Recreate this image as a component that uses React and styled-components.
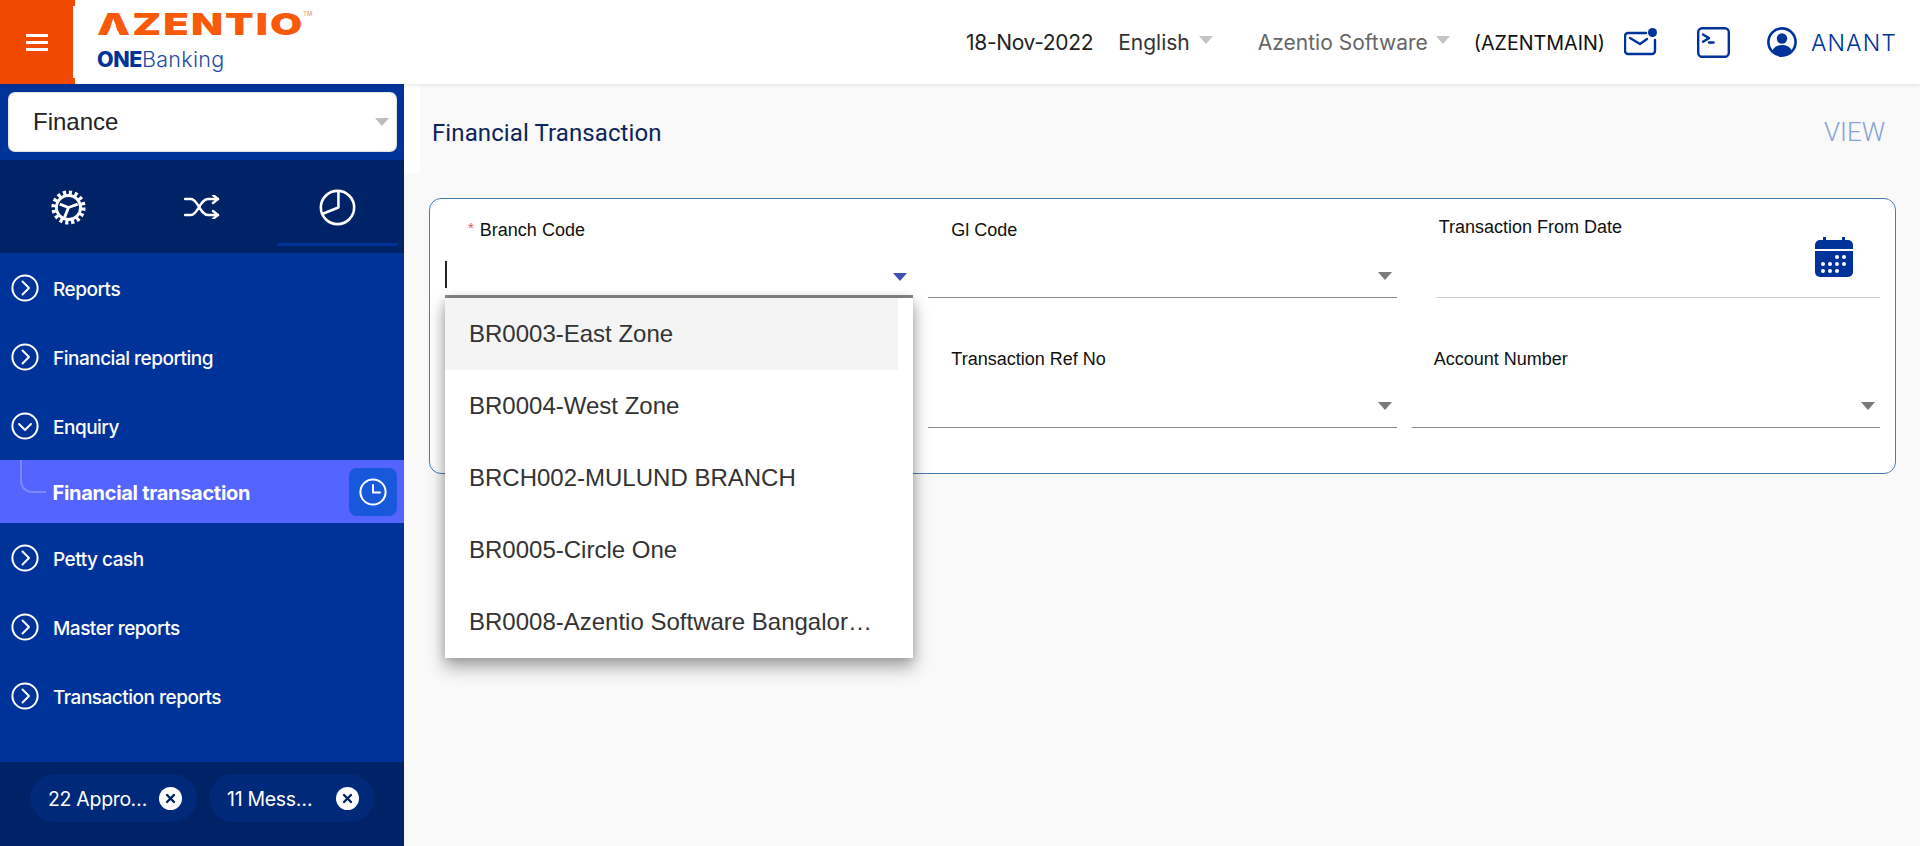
import React from 'react';
import styled, { createGlobalStyle } from 'styled-components';

const Global = createGlobalStyle`
  html, body { margin: 0; padding: 0; height: 100%; background: #f9f9f9; }
  * { box-sizing: border-box; }
  body { font-family: "Inter", "Liberation Sans", sans-serif; overflow: hidden; }
`;

const Page = styled.div`
  width: 1920px; height: 846px; display: flex; flex-direction: column; background: #f9f9f9;
`;
const Header = styled.header`
  height: 84px; flex: none; display: flex; align-items: center; background: #fff;
  box-shadow: 0 1px 4px rgba(0,0,0,.1); position: relative; z-index: 2; padding-right: 23px;
`;
const MenuButton = styled.div`
  width: 73px; height: 84px; flex: none; background: #f24900; display: flex; flex-direction: column;
  align-items: center; justify-content: center; gap: 4px; position: relative;
  &::after {
    content: ""; position: absolute; left: 73px; top: 0; bottom: 0; width: 2px;
    background: linear-gradient(#f24900 0 6px, transparent 6px 78px, #f24900 78px);
  }
`;
const MenuLine = styled.span` width: 22px; height: 3px; background: #fff; `;
const Logo = styled.div`
  margin-left: 24px; width: 240px; display: flex; flex-direction: column; align-self: flex-start; padding-top: 8px;
`;
const LogoRow = styled.div` height: 32px; position: relative; `;
const LogoMark = styled.div`
  height: 32px; line-height: 32px; font-size: 30px; font-weight: 900; color: #f85a0a;
  letter-spacing: 1.5px; transform: scaleX(1.39); transform-origin: left center; white-space: nowrap;
`;
const LogoWave = styled.svg` position: absolute; left: 0; top: 5px; `;
const Tm = styled.sup`
  position: absolute; left: 206px; top: 2px; margin: 0; font-size: 6px; line-height: 8px; font-weight: 500; color: #f4a27a;
`;
const LogoProduct = styled.div`
  margin-top: 6px; font-size: 21.5px; line-height: 26px; color: #1f4aa8; font-weight: 300; letter-spacing: .3px;
  b { font-weight: 800; color: #003399; letter-spacing: -.4px; }
`;
const HeaderRight = styled.div` margin-left: auto; display: flex; align-items: center; `;
const HeadText = styled.span`
  font-size: ${p => p.$size || 21}px; color: ${p => p.$color || '#222'}; margin-left: ${p => p.$gap || 0}px;
  white-space: nowrap; letter-spacing: ${p => p.$track || 0}px; line-height: 26px; font-weight: ${p => p.$weight || 400};
  padding-top: 2px;
`;
const Caret = styled.span`
  width: 0; height: 0; border-left: 7px solid transparent; border-right: 7px solid transparent;
  border-top: 8px solid ${p => p.$color || '#c4c4c4'}; margin-left: ${p => p.$gap || 8}px; flex: none;
  margin-bottom: ${p => p.$lift || 0}px;
`;
const HeadIcon = styled.svg` margin-left: ${p => p.$gap}px; flex: none; display: block; `;

const Body = styled.div` flex: 1; min-height: 0; display: flex; `;
const Sidebar = styled.aside`
  width: 404px; flex: none; background: #003399; display: flex; flex-direction: column;
`;
const ModuleWrap = styled.div` height: 76px; flex: none; padding: 8px 7px 8px 8px; `;
const ModuleSelect = styled.div`
  height: 60px; background: #fff; border-radius: 7px; display: flex; align-items: center; justify-content: space-between;
  padding: 0 8px 0 25px; font-family: "Liberation Sans", sans-serif; font-size: 24px; color: #222;
  box-shadow: inset 0 0 2px rgba(0,0,0,.4);
`;
const Tabs = styled.div` height: 93px; flex: none; background: #002266; display: flex; `;
const Tab = styled.div`
  width: ${p => p.$w}px; margin-left: ${p => p.$left || 0}px; flex: none;
  display: flex; align-items: center; justify-content: center; padding-top: 11px; margin-bottom: 7px;
  border-bottom: 3px solid ${p => (p.$active ? '#003399' : 'transparent')};
`;
const Menu = styled.nav` flex: 1; display: flex; flex-direction: column; `;
const MenuRow = styled.div`
  height: 69px; flex: none; display: flex; align-items: center; padding-left: 11px; color: #fff;
  font-size: 19px; font-weight: 500; letter-spacing: -.5px;
`;
const RowLabel = styled.span` margin-left: 14px; margin-top: 4px; `;
const ActiveRow = styled.div`
  height: 63px; flex: none; background: #5464ff; display: flex; align-items: center; padding: 0 7px 0 52.500px; color: #fff;
  font-size: 20px; font-weight: 700; letter-spacing: -.3px; justify-content: space-between; position: relative;
  &::before {
    content: ""; position: absolute; left: 20px; top: 0; width: 24px; height: 31px;
    border-left: 2px solid #7d88ff; border-bottom: 2px solid #7d88ff; border-bottom-left-radius: 12px;
  }
`;
const ActiveLabel = styled.span` padding-top: 2px; `;
const ClockBox = styled.div`
  width: 48px; height: 48px; border-radius: 8px; background: #1859dc; display: flex; align-items: center; justify-content: center;
`;
const Footer = styled.div`
  height: 84px; flex: none; background: #002266; display: flex; gap: 12px; padding: 12px 0 0 30px;
`;
const Chip = styled.div`
  width: ${p => p.$w}px; height: 48px; border-radius: 24px; background: #00297a; color: #fff; display: flex; align-items: center;
  padding: 0 15px 0 18px; justify-content: space-between; font-size: 19.5px; letter-spacing: -.3px;
`;
const ChipText = styled.span`
  width: ${p => p.$w}px; overflow: hidden; white-space: nowrap; text-overflow: ellipsis; padding-top: 2px;
`;
const ChipClose = styled.span`
  width: 23px; height: 23px; border-radius: 50%; background: #fff; display: flex; align-items: center; justify-content: center; flex: none;
`;

const Main = styled.main` flex: 1; min-width: 0; display: flex; flex-direction: column; `;
const TitleBar = styled.div` height: 89px; flex: none; display: flex; align-items: center; padding-right: 35px; `;
const TitleEdge = styled.div` width: 16px; height: 100%; background: #fff; flex: none; `;
const Title = styled.h1`
  margin: 8px 0 0 12px; font-size: 24px; font-weight: 400; color: #0b2559; font-family: "Roboto", sans-serif; line-height: 30px; letter-spacing: .1px;
`;
const ViewLink = styled.span`
  margin-left: auto; font-size: 26px; line-height: 30px; font-weight: 300; color: #88a3d8; font-family: "Roboto", sans-serif; margin-top: 6px;
`;
const Panel = styled.section`
  margin: 25px 24px 0 25px; background: #fff; border: 1px solid #4a7ab0; border-radius: 12px; padding: 0 15px 45px;
  display: grid; grid-template-columns: repeat(3, 1fr); column-gap: 15px; row-gap: 31px; position: relative;
  font-family: "Liberation Sans", sans-serif;
`;
const Field = styled.div`
  height: 99px; position: relative; display: flex; flex-direction: column; margin-left: ${p => p.$inset || 0}px;
  border-bottom: ${p => p.$thick ? 3 : 1}px solid ${p => p.$line || '#8a8a8a'};
`;
const Label = styled.label`
  font-size: 18px; line-height: 22px; color: #111; margin-top: ${p => p.$top}px; padding-left: ${p => p.$left}px;
`;
const Star = styled.span` color: #ef4a5f; font-size: 15px; margin-right: 6px; position: relative; top: -3px; `;
const Control = styled.div`
  flex: 1; display: flex; align-items: center; justify-content: flex-end; position: relative;
  padding: ${p => (p.$focus ? '16px 6px 0 0' : '14px 5px 0 0')};
`;
const TextCaret = styled.span` position: absolute; left: 0; top: 19px; width: 2px; height: 27px; background: #222; `;
const DateIcon = styled.svg` position: absolute; right: 27px; top: -1px; `;
const Dropdown = styled.ul`
  position: absolute; top: 99px; left: 0; width: 468px; margin: 0; padding: 0; list-style: none; background: #fff; z-index: 5;
  box-shadow: 0 9px 16px 1px rgba(0,0,0,.3), 0 1px 10px rgba(0,0,0,.18);
`;
const Option = styled.li`
  width: 453px; height: 72px; padding: 0 24px; line-height: 72px; font-size: 24px; color: #333;
  white-space: nowrap; overflow: hidden; text-overflow: ellipsis; background: ${p => (p.$on ? '#f4f4f4' : '#fff')};
`;

const Chevron = ({ down }) => (
  <svg width="28" height="28" viewBox="0 0 28 28" fill="none" stroke="#fff" strokeWidth="2" strokeLinecap="round" strokeLinejoin="round">
    <circle cx="14" cy="14" r="12.6" />
    {down ? <path d="M8 12l6 6 6-6" /> : <path d="M11.5 7.5l6.5 6.5-6.5 6.5" />}
  </svg>
);

const Gear = () => (
  <svg width="35" height="35" viewBox="0 0 36 36" fill="none" stroke="#fff">
    <circle cx="18" cy="18" r="14.8" strokeWidth="5.6" strokeDasharray="3.1 2.7" />
    <circle cx="18" cy="18" r="12.4" strokeWidth="3" />
    <path d="M18 18l9.500-3.500M18 18L9 14.500M18 18l-4 10" strokeWidth="3" />
  </svg>
);

const X = () => (
  <svg width="11" height="11" viewBox="0 0 11 11" stroke="#002266" strokeWidth="2.4" strokeLinecap="round">
    <path d="M2 2l7 7M9 2l-7 7" />
  </svg>
);

const items1 = [['Reports'], ['Financial reporting'], ['Enquiry', true]];
const items2 = ['Petty cash', 'Master reports', 'Transaction reports'];
const options = ['BR0003-East Zone', 'BR0004-West Zone', 'BRCH002-MULUND BRANCH', 'BR0005-Circle One', 'BR0008-Azentio Software Bangalore Branch'];

export default function App() {
  return (
    <Page>
      <Global />
      <Header>
        <MenuButton><MenuLine /><MenuLine /><MenuLine /></MenuButton>
        <Logo>
          <LogoRow>
            <LogoMark>AZENTIO</LogoMark>
            <LogoWave width="32" height="24" viewBox="0 0 32 24">
              <path d="M8 24C12 22 13 12 16.500 10 20 12 20 22 25 24z" fill="#fff" />
            </LogoWave>
            <Tm>TM</Tm>
          </LogoRow>
          <LogoProduct><b>ONE</b>Banking</LogoProduct>
        </Logo>
        <HeaderRight>
          <HeadText $track={-.33}>18-Nov-2022</HeadText>
          <HeadText $gap={25} $color="#333">English</HeadText>
          <Caret $gap={9} $lift={4} />
          <HeadText $gap={45} $color="#666">Azentio Software</HeadText>
          <Caret $gap={8} $lift={4} />
          <HeadText $gap={24} $size={19.7} $color="#111">(AZENTMAIN)</HeadText>
          <HeadIcon $gap={19} width="34" height="28" viewBox="0 0 34 28" fill="none" stroke="#003399" strokeWidth="2.4" strokeLinecap="round" strokeLinejoin="round">
            <path d="M22 5H4a3 3 0 0 0-3 3v15a3 3 0 0 0 3 3h24a3 3 0 0 0 3-3V12" />
            <path d="M6 10l10 6 7-5" />
            <circle cx="28.5" cy="4.5" r="4.5" fill="#003399" stroke="none" />
          </HeadIcon>
          <HeadIcon $gap={39} width="33" height="31" viewBox="0 0 33 31" fill="none" stroke="#003399" strokeWidth="2.4" strokeLinecap="round" strokeLinejoin="round">
            <rect x="1.2" y="1.2" width="30.6" height="28.6" rx="4" />
            <path d="M6 7.5l6 3.6-6 3.6" />
            <path d="M12 15.5h4.5" />
          </HeadIcon>
          <HeadIcon $gap={37} width="30" height="30" viewBox="0 0 30 30">
            <circle cx="15" cy="15" r="13.6" fill="none" stroke="#003399" strokeWidth="2.6" />
            <circle cx="15" cy="11.5" r="5.2" fill="#003399" />
            <path d="M5.5 23.5C7 19.5 11 18 15 18s8 1.500 9.500 5.500A13 13 0 0 1 15 28.500a13 13 0 0 1-9.500-5z" fill="#003399" />
          </HeadIcon>
          <HeadText $gap={14} $color="#003399" $size={23} $track={1.1} $weight={300}>ANANT</HeadText>
        </HeaderRight>
      </Header>
      <Body>
        <Sidebar>
          <ModuleWrap>
            <ModuleSelect>Finance<Caret $color="#bdbdbd" /></ModuleSelect>
          </ModuleWrap>
          <Tabs>
            <Tab $w={136}><Gear /></Tab>
            <Tab $w={132}>
              <svg width="36" height="24" viewBox="0 0 36 24" fill="none" stroke="#fff" strokeWidth="2.4" strokeLinecap="round" strokeLinejoin="round">
                <path d="M1 4h6c7 0 9 16 17 16h10M1 20h6c7 0 9-16 17-16h10" />
                <path d="M29 0l5 4-5 4M29 16l5 4-5 4" />
              </svg>
            </Tab>
            <Tab $w={120} $left={9} $active>
              <svg width="37" height="37" viewBox="0 0 40 40" fill="none" stroke="#fff" strokeWidth="2.8" strokeLinejoin="round">
                <circle cx="20" cy="20" r="18" />
                <path d="M21 2v18L3.500 27" />
              </svg>
            </Tab>
          </Tabs>
          <Menu>
            {items1.map(([t, d]) => (
              <MenuRow key={t}><Chevron down={d} /><RowLabel>{t}</RowLabel></MenuRow>
            ))}
            <ActiveRow>
              <ActiveLabel>Financial transaction</ActiveLabel>
              <ClockBox>
                <svg width="28" height="28" viewBox="0 0 28 28" fill="none" stroke="#fff" strokeWidth="2" strokeLinecap="round" strokeLinejoin="round">
                  <circle cx="14" cy="14" r="12.6" />
                  <path d="M14 7v7.500h7" />
                </svg>
              </ClockBox>
            </ActiveRow>
            {items2.map(t => (
              <MenuRow key={t}><Chevron /><RowLabel>{t}</RowLabel></MenuRow>
            ))}
          </Menu>
          <Footer>
            <Chip $w={167}><ChipText $w={101}>22 Approvals</ChipText><ChipClose><X /></ChipClose></Chip>
            <Chip $w={165}><ChipText $w={88}>11 Messages</ChipText><ChipClose><X /></ChipClose></Chip>
          </Footer>
        </Sidebar>
        <Main>
          <TitleBar>
            <TitleEdge />
            <Title>Financial Transaction</Title>
            <ViewLink>VIEW</ViewLink>
          </TitleBar>
          <Panel>
            <Field $thick>
              <Label $top={20} $left={23}><Star>*</Star>Branch Code</Label>
              <Control $focus>
                <TextCaret />
                <Caret $color="#3f51b5" />
              </Control>
              <Dropdown>
                {options.map((o, i) => <Option key={o} $on={i === 0}>{o}</Option>)}
              </Dropdown>
            </Field>
            <Field>
              <Label $top={20} $left={23}>Gl Code</Label>
              <Control><Caret $color="#7a7a7a" /></Control>
            </Field>
            <Field $inset={25} $line="#c6c6c6">
              <Label $top={17} $left={2}>Transaction From Date</Label>
              <Control>
                <DateIcon width="38" height="40" viewBox="0 0 38 40">
                  <path d="M8 0h3v3h16V0h3v3h3a5 5 0 0 1 5 5v4H0V8a5 5 0 0 1 5-5h3z" fill="#003399" />
                  <path d="M0 14h38v21a5 5 0 0 1-5 5H5a5 5 0 0 1-5-5z" fill="#003399" />
                  <g fill="#fff">
                    <circle cx="22" cy="20" r="2" /><circle cx="29" cy="20" r="2" />
                    <circle cx="8" cy="27" r="2" /><circle cx="15" cy="27" r="2" /><circle cx="22" cy="27" r="2" /><circle cx="29" cy="27" r="2" />
                    <circle cx="8" cy="34" r="2" /><circle cx="15" cy="34" r="2" /><circle cx="22" cy="34" r="2" />
                  </g>
                </DateIcon>
              </Control>
            </Field>
            <Field />
            <Field>
              <Label $top={19} $left={23}>Transaction Ref No</Label>
              <Control><Caret $color="#7a7a7a" /></Control>
            </Field>
            <Field>
              <Label $top={19} $left={22}>Account Number</Label>
              <Control><Caret $color="#7a7a7a" /></Control>
            </Field>
          </Panel>
        </Main>
      </Body>
    </Page>
  );
}
